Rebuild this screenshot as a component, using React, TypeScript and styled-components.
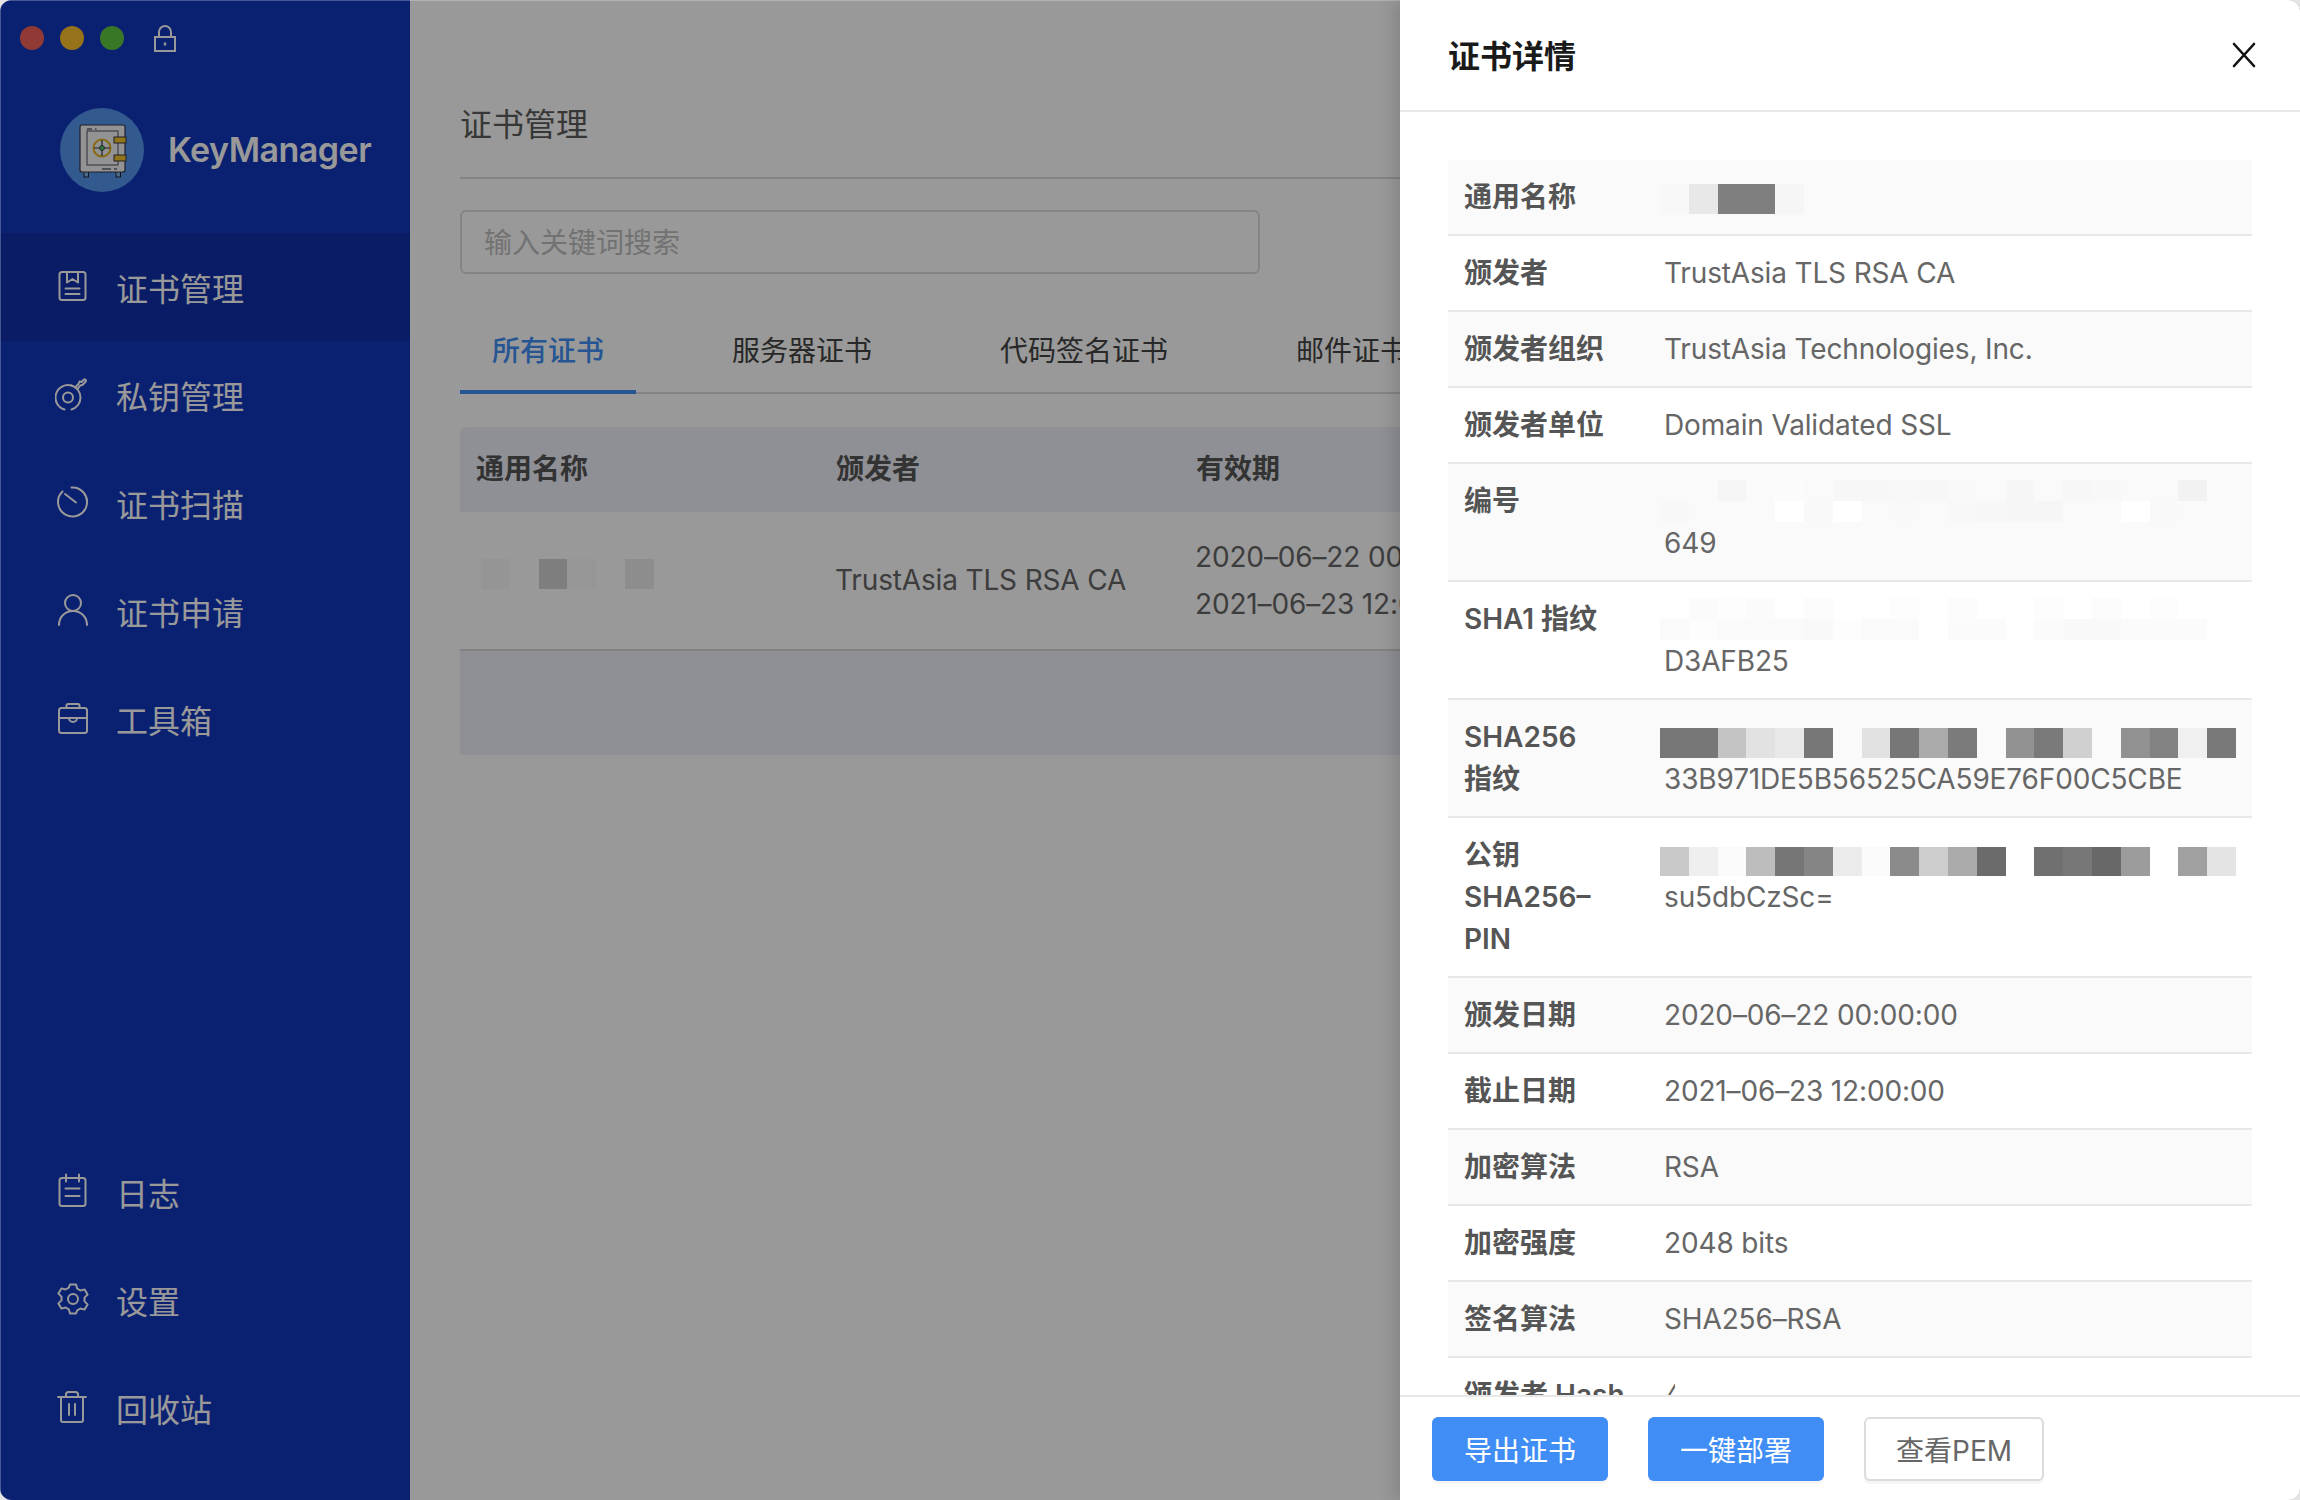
import React from "react";
import styled, { createGlobalStyle } from "styled-components";

const FONT = `Inter, "Noto Sans CJK SC", sans-serif`;

const GlobalStyle = createGlobalStyle`
  html, body {
    margin: 0;
    padding: 0;
    background: #e4e4e4;
    font-family: ${FONT};
  }
  * {
    box-sizing: border-box;
  }
`;

const Window = styled.div`
  position: relative;
  display: flex;
  width: 2300px;
  height: 1500px;
  overflow: hidden;
  border-radius: 12px;
  background: #fff;
`;

const Sidebar = styled.aside`
  display: flex;
  flex: none;
  flex-direction: column;
  width: 410px;
  padding-bottom: 38px;
  background: #1237be;
`;

const TitleBar = styled.div`
  display: flex;
  align-items: center;
  height: 76px;
  padding-left: 20px;
  gap: 16px;
`;

const Light = styled.span<{ $color: string }>`
  width: 24px;
  height: 24px;
  border-radius: 50%;
  background: ${({ $color }) => $color};
`;

const LockIcon = styled.svg`
  margin: 2px 0 0 13px;
  width: 24px;
  height: 28px;
`;

const Brand = styled.div`
  display: flex;
  align-items: center;
  gap: 24px;
  height: 157px;
  padding: 0 0 10px 60px;
`;

const BrandName = styled.span`
  color: #fff;
  font-size: 34px;
  font-weight: 600;
  letter-spacing: -0.5px;
`;

const NavList = styled.nav<{ $push?: boolean }>`
  display: flex;
  flex-direction: column;
  margin-top: ${({ $push }) => ($push ? "auto" : "0")};
`;

const NavItem = styled.a<{ $active?: boolean }>`
  display: flex;
  align-items: center;
  gap: 25px;
  height: 108px;
  padding-left: 55px;
  color: #fff;
  font-size: 32px;
  background: ${({ $active }) => ($active ? "#0f2fa8" : "transparent")};
`;

const NavIcon = styled.svg`
  flex: none;
  width: 36px;
  height: 36px;
  margin-top: -2px;
  fill: none;
  stroke: #fff;
  stroke-width: 2;
  stroke-linecap: round;
  stroke-linejoin: round;
`;

const Main = styled.main`
  flex: 1;
  min-width: 0;
  padding: 101px 50px 0;
`;

const PageTitle = styled.h1`
  margin: 0;
  padding-bottom: 28px;
  border-bottom: 2px solid #dcdcdc;
  color: #5c5c5c;
  font-size: 32px;
  font-weight: 400;
  line-height: 48px;
`;

const SearchBox = styled.div`
  display: flex;
  align-items: center;
  width: 800px;
  height: 64px;
  margin-top: 31px;
  padding: 0 0 2px 22px;
  border: 2px solid #dcdcdc;
  border-radius: 6px;
  color: #bfbfbf;
  font-size: 28px;
`;

const TabBar = styled.div`
  display: flex;
  gap: 64px;
  height: 74px;
  margin-top: 46px;
  border-bottom: 2px solid #dcdcdc;
`;

const Tab = styled.div<{ $active?: boolean }>`
  height: 74px;
  padding: 0 32px;
  border-bottom: 4px solid ${({ $active }) => ($active ? "#408ef5" : "transparent")};
  color: ${({ $active }) => ($active ? "#408ef5" : "#444")};
  font-size: 28px;
  font-weight: ${({ $active }) => ($active ? 500 : 400)};
  line-height: 62px;
  white-space: nowrap;
`;

const TableHead = styled.div`
  display: grid;
  grid-template-columns: 360px 360px 1fr;
  align-items: center;
  height: 85px;
  margin-top: 33px;
  padding-bottom: 5px;
  border-radius: 6px 6px 0 0;
  background: #eef0f8;
`;

const HeadCell = styled.div`
  padding-left: 16px;
  color: #555;
  font-size: 28px;
  font-weight: 600;
`;

const TableRow = styled.div`
  display: grid;
  grid-template-columns: 360px 360px 1fr;
  align-items: center;
  padding: 21.5px 0;
  border-bottom: 2px solid #d8d8d8;
`;

const RowCell = styled.div`
  padding-left: 15px;
  color: #666;
  font-size: 28px;
  letter-spacing: -0.15px;
  line-height: 47px;
  white-space: nowrap;
`;

const TableFill = styled.div`
  height: 104px;
  background: #eef0f8;
`;

const Scrim = styled.div`
  position: absolute;
  inset: 0;
  background: rgba(0, 0, 0, 0.4);
  box-shadow: inset 1px 1px 0 rgba(255, 255, 255, 0.25);
`;

const Drawer = styled.section`
  position: absolute;
  top: 0;
  right: 0;
  bottom: 0;
  display: flex;
  flex-direction: column;
  width: 900px;
  background: #fff;
  box-shadow: -6px 0 16px rgba(0, 0, 0, 0.14);
`;

const DrawerHeader = styled.header`
  display: flex;
  flex: none;
  align-items: center;
  justify-content: space-between;
  height: 112px;
  padding: 0 44px 0 48px;
  border-bottom: 2px solid #e8e8e8;
`;

const DrawerTitle = styled.h2`
  margin: 0 0 3px;
  color: #1a1a1a;
  font-size: 32px;
  font-weight: 600;
`;

const CloseIcon = styled.svg`
  width: 24px;
  height: 26px;
  fill: none;
  stroke: #111;
  stroke-width: 2.6;
  stroke-linecap: round;
`;

const DrawerBody = styled.div`
  flex: 1;
  min-height: 0;
  overflow: hidden;
  padding: 48px 48px 0;
`;

const DetailRow = styled.div<{ $stripe: boolean }>`
  display: grid;
  grid-template-columns: 200px 1fr;
  border-bottom: 2px solid #e8e8e8;
  background: ${({ $stripe }) => ($stripe ? "#fafafa" : "#fff")};
`;

const DetailLabel = styled.div`
  padding: 16px;
  color: #555;
  font-size: 28px;
  font-weight: 600;
  line-height: 42px;
  word-break: keep-all;
`;

const DetailValue = styled.div`
  min-width: 0;
  padding: 16px;
  color: #666;
  font-size: 28px;
  letter-spacing: -0.15px;
  line-height: 42px;
`;

const CutText = styled.span`
  display: inline-block;
  width: 11px;
  overflow: hidden;
  vertical-align: top;
`;

const MosaicStack = styled.div<{ $bottom: boolean }>`
  display: flex;
  flex-direction: column;
  justify-content: ${({ $bottom }) => ($bottom ? "flex-end" : "flex-start")};
  height: 42px;
  margin-left: -4px;
`;

const MosaicStrip = styled.div<{ $height: number }>`
  display: flex;
  height: ${({ $height }) => $height}px;
`;

const MosaicCell = styled.span<{ $color: string }>`
  flex: none;
  width: 28.8px;
  background: ${({ $color }) => $color};
`;

const RowMosaic = styled.div`
  display: flex;
  height: 30px;
  margin: 0 0 14px 6px;
`;

const DrawerFooter = styled.footer`
  display: flex;
  flex: none;
  gap: 40px;
  height: 105px;
  padding: 20px 32px 0;
  border-top: 2px solid #e8e8e8;
`;

const ActionButton = styled.button<{ $primary?: boolean }>`
  height: 64px;
  padding: 0 ${({ $primary }) => ($primary ? "32px" : "30px")};
  border: ${({ $primary }) => ($primary ? "none" : "2px solid #dcdcdc")};
  border-radius: 6px;
  background: ${({ $primary }) => ($primary ? "#408ef5" : "#fff")};
  box-shadow: 0 3px 0 rgba(0, 0, 0, 0.04);
  color: ${({ $primary }) => ($primary ? "#fff" : "#666")};
  font-family: ${FONT};
  font-size: 28px;
`;

const topNav = [
  {
    label: "证书管理",
    active: true,
    icon: (
      <>
        <rect x="4.5" y="4" width="26" height="28" rx="2.5" />
        <path d="M12 4v10.5l5.5-3.5 5.5 3.5V4" />
        <path d="M10.5 20.5h14M10.5 26h14" />
      </>
    ),
  },
  {
    label: "私钥管理",
    icon: (
      <>
        <path d="M9.5 33.5A12.5 12.5 0 1 1 16.5 9.5" />
        <path d="M16.5 9.5A12.5 12.5 0 0 1 16.5 33.5" />
        <circle cx="13" cy="21.5" r="5" />
        <path d="M20 11.5l3.5-3.5 1-2.5 2 .5 2.5-2.5c1-.6 2.6.8 1.8 2l-3.3 3.5-2 .3-3 3.5" />
      </>
    ),
  },
  {
    label: "证书扫描",
    icon: (
      <>
        <path d="M16.5 3.5a14.5 14.5 0 1 1-9 4" />
        <path d="M10 10l11 8.5" />
      </>
    ),
  },
  {
    label: "证书申请",
    icon: (
      <>
        <circle cx="18" cy="11" r="8" />
        <path d="M4 33c0-8 6-14 14-14s14 6 14 14" />
      </>
    ),
  },
  {
    label: "工具箱",
    icon: (
      <>
        <rect x="4" y="8" width="28" height="25" rx="2.5" />
        <path d="M11.5 8V5.5a1.5 1.5 0 0 1 1.5-1.5h10a1.5 1.5 0 0 1 1.5 1.5V8" />
        <path d="M4 18h10M22 18h10M14 18a4 4 0 0 0 8 0z" />
      </>
    ),
  },
];

const bottomNav = [
  {
    label: "日志",
    icon: (
      <>
        <rect x="4.5" y="5" width="26" height="28" rx="2.5" />
        <path d="M11 1.5v7M24 1.5v7M10.5 15.5h14M10.5 23h14" />
      </>
    ),
  },
  {
    label: "设置",
    icon: (
      <>
        <circle cx="18" cy="18" r="5" />
        <path d="M15 3.5h6l1.2 4.2 3.2 1.8 4.2-1.1 3 5.2-3.1 3v3.8l3.1 3-3 5.2-4.2-1.1-3.2 1.8L21 32.5h-6l-1.2-4.2-3.2-1.8-4.2 1.1-3-5.2 3.1-3v-3.8l-3.1-3 3-5.2 4.2 1.1 3.2-1.8z" />
      </>
    ),
  },
  {
    label: "回收站",
    icon: (
      <>
        <path d="M3 8h28M11 8V5.5A2.5 2.5 0 0 1 13.5 3h7A2.5 2.5 0 0 1 23 5.5V8" />
        <path d="M6 8v23a2 2 0 0 0 2 2h18a2 2 0 0 0 2-2V8" />
        <path d="M14 15v11M20 15v11" />
      </>
    ),
  },
];

const rowNameCells = ["#f8f8f8", "transparent", "#d2d2d2", "#fbfbfb", "transparent", "#ececec"];
const sha256Cells = ["#777", "#777", "#c4c4c4", "#e2e2e2", "#e9e9e9", "#777", "#fafafa", "#e2e2e2", "#777", "#aaa", "#7b7b7b", "#fafafa", "#929292", "#7a7a7a", "#d0d0d0", "#fafafa", "#919191", "#828282", "#f0f0f0", "#797979"];
const pinCells = ["#c9c9c9", "#efefef", "#fbfbfb", "#bdbdbd", "#767676", "#858585", "#ebebeb", "#fbfbfb", "#8b8b8b", "#cdcdcd", "#ababab", "#6b6b6b", "#fff", "#707070", "#777", "#686868", "#9c9c9c", "#fff", "#a0a0a0", "#e4e4e4"];
const nameCells = ["#f8f8f8", "#e8e8e8", "#7f7f7f", "#7f7f7f", "#f6f6f6"];
const serialTop = ["#fafafa", "#fafafa", "#f5f5f5", "#fafafa", "#fbfbfb", "#fafafa", "#f7f7f7", "#f7f7f7", "#f8f8f8", "#f7f7f7", "#f9f9f9", "#fafafa", "#f6f6f6", "#fafafa", "#f7f7f7", "#f8f8f8", "#fafafa", "#fafafa", "#f2f2f2", "#fafafa"];
const serialBottom = ["#f8f8f8", "#fafafa", "#fafafa", "#fafafa", "#fff", "#f9f9f9", "#fff", "#fafafa", "#f9f9f9", "#fafafa", "#f8f8f8", "#f7f7f7", "#f6f6f6", "#f6f6f6", "#fafafa", "#fafafa", "#fff", "#f9f9f9", "#fafafa", "#fafafa"];
const sha1Top = ["#fff", "#fbfbfb", "#fdfdfd", "#fbfbfb", "#fff", "#fcfcfc", "#fff", "#fff", "#fdfdfd", "#fff", "#fcfcfc", "#fff", "#fff", "#fdfdfd", "#fff", "#fcfcfc", "#fff", "#fdfdfd", "#fff", "#fff"];
const sha1Bottom = ["#fafafa", "#fdfdfd", "#fafafa", "#fafafa", "#fafafa", "#f9f9f9", "#fdfdfd", "#fafafa", "#fafafa", "#fff", "#fbfbfb", "#fbfbfb", "#fff", "#fbfbfb", "#f9f9f9", "#f9f9f9", "#fbfbfb", "#fbfbfb", "#fbfbfb", "#fff"];

interface Strip {
  height: number;
  cells: string[];
}

function Mosaic({ strips, bottom = false }: { strips: Strip[]; bottom?: boolean }) {
  return (
    <MosaicStack $bottom={bottom}>
      {strips.map((strip, i) => (
        <MosaicStrip key={i} $height={strip.height}>
          {strip.cells.map((color, j) => (
            <MosaicCell key={j} $color={color} />
          ))}
        </MosaicStrip>
      ))}
    </MosaicStack>
  );
}

const details: { label: string; value?: string; strips?: Strip[]; bottom?: boolean; cut?: boolean }[] = [
  { label: "通用名称", strips: [{ height: 8, cells: [] }, { height: 30, cells: nameCells }] },
  { label: "颁发者", value: "TrustAsia TLS RSA CA" },
  { label: "颁发者组织", value: "TrustAsia Technologies, Inc." },
  { label: "颁发者单位", value: "Domain Validated SSL" },
  { label: "编号", value: "649", strips: [{ height: 21, cells: serialTop }, { height: 21, cells: serialBottom }] },
  { label: "SHA1 指纹", value: "D3AFB25", strips: [{ height: 21, cells: sha1Top }, { height: 21, cells: sha1Bottom }] },
  { label: "SHA256 指纹", value: "33B971DE5B56525CA59E76F00C5CBE", strips: [{ height: 30, cells: sha256Cells }], bottom: true },
  { label: "公钥 SHA256–PIN", value: "su5dbCzSc=", strips: [{ height: 29, cells: pinCells }], bottom: true },
  { label: "颁发日期", value: "2020–06–22 00:00:00" },
  { label: "截止日期", value: "2021–06–23 12:00:00" },
  { label: "加密算法", value: "RSA" },
  { label: "加密强度", value: "2048 bits" },
  { label: "签名算法", value: "SHA256–RSA" },
  { label: "颁发者 Hash", value: "4", cut: true },
];

function SafeLogo() {
  return (
    <svg width="84" height="84" viewBox="0 0 84 84">
      <circle cx="42" cy="42" r="42" fill="#5596ed" />
      <rect x="24" y="63" width="4.5" height="6" fill="#7fb2e0" stroke="#223" strokeWidth="1" />
      <rect x="56" y="63" width="4.5" height="6" fill="#7fb2e0" stroke="#223" strokeWidth="1" />
      <rect x="20" y="17" width="45" height="47" rx="2" fill="#f6f6f6" stroke="#334" strokeWidth="1.2" />
      <rect x="27" y="23" width="31" height="34" fill="#f6f6f6" stroke="#667" strokeWidth="1.2" />
      <rect x="54" y="29" width="12" height="6" fill="#f4c22c" stroke="#334" strokeWidth="1" />
      <rect x="54" y="47" width="12" height="6" fill="#f4c22c" stroke="#334" strokeWidth="1" />
      <circle cx="42" cy="40" r="8.5" fill="#f6f6f6" stroke="#e3b21d" strokeWidth="2" />
      <path d="M42 32v16M34 40h16" stroke="#334" strokeWidth="1.2" />
      <circle cx="42" cy="40" r="2.5" fill="#4cc35a" stroke="#334" strokeWidth=".8" />
      <path d="M27 21h5M35 21h1.5M42 61h9M54 61h3" stroke="#667" strokeWidth="1.4" />
    </svg>
  );
}

function App() {
  return (
    <>
      <GlobalStyle />
      <Window>
        <Sidebar>
          <TitleBar>
            <Light $color="#f25f58" />
            <Light $color="#fbbe2e" />
            <Light $color="#5ec73e" />
            <LockIcon viewBox="0 0 24 28" fill="none" stroke="#fff" strokeWidth="2">
              <rect x="2" y="12" width="20" height="14" />
              <path d="M6 12V7a6 6 0 0 1 12 0v5" />
              <path d="M12 17.5v3" strokeWidth="2.4" />
            </LockIcon>
          </TitleBar>
          <Brand>
            <SafeLogo />
            <BrandName>KeyManager</BrandName>
          </Brand>
          <NavList>
            {topNav.map((item) => (
              <NavItem key={item.label} $active={item.active}>
                <NavIcon viewBox="0 0 36 36">{item.icon}</NavIcon>
                {item.label}
              </NavItem>
            ))}
          </NavList>
          <NavList $push>
            {bottomNav.map((item) => (
              <NavItem key={item.label}>
                <NavIcon viewBox="0 0 36 36">{item.icon}</NavIcon>
                {item.label}
              </NavItem>
            ))}
          </NavList>
        </Sidebar>
        <Main>
          <PageTitle>证书管理</PageTitle>
          <SearchBox>输入关键词搜索</SearchBox>
          <TabBar>
            <Tab $active>所有证书</Tab>
            <Tab>服务器证书</Tab>
            <Tab>代码签名证书</Tab>
            <Tab>邮件证书</Tab>
          </TabBar>
          <TableHead>
            <HeadCell>通用名称</HeadCell>
            <HeadCell>颁发者</HeadCell>
            <HeadCell>有效期</HeadCell>
          </TableHead>
          <TableRow>
            <RowCell>
              <RowMosaic>
                {rowNameCells.map((color, i) => (
                  <MosaicCell key={i} $color={color} />
                ))}
              </RowMosaic>
            </RowCell>
            <RowCell>TrustAsia TLS RSA CA</RowCell>
            <RowCell>
              2020–06–22 00:00:00
              <br />
              2021–06–23 12:00:00
            </RowCell>
          </TableRow>
          <TableFill />
        </Main>
        <Scrim />
        <Drawer>
          <DrawerHeader>
            <DrawerTitle>证书详情</DrawerTitle>
            <CloseIcon viewBox="0 0 24 26">
              <path d="M2 2l20 22M22 2L2 24" />
            </CloseIcon>
          </DrawerHeader>
          <DrawerBody>
            {details.map((row, i) => (
              <DetailRow key={row.label} $stripe={i % 2 === 0}>
                <DetailLabel>{row.label}</DetailLabel>
                <DetailValue>
                  {row.strips && <Mosaic strips={row.strips} bottom={row.bottom} />}
                  {row.cut ? <CutText>{row.value}</CutText> : row.value}
                </DetailValue>
              </DetailRow>
            ))}
          </DrawerBody>
          <DrawerFooter>
            <ActionButton $primary>导出证书</ActionButton>
            <ActionButton $primary>一键部署</ActionButton>
            <ActionButton>查看PEM</ActionButton>
          </DrawerFooter>
        </Drawer>
      </Window>
    </>
  );
}

export default App;
